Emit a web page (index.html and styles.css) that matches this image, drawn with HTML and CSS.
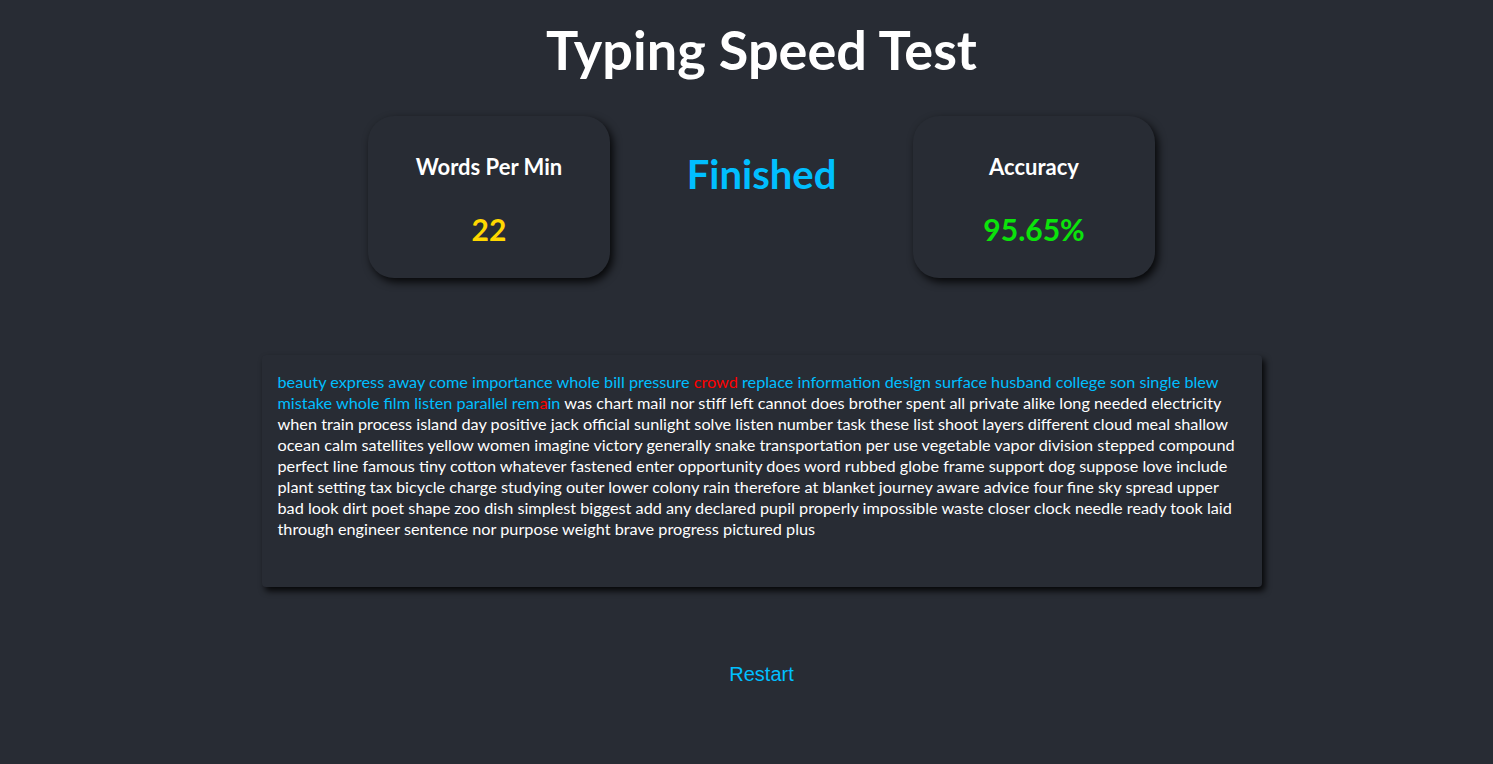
FILE: index.html
```html
<!DOCTYPE html>
<html>
<head>
<meta charset="utf-8">
<link rel="stylesheet" href="styles.css">
</head>
<body>
<div class="app">
  <h1 class="title">Typing Speed Test</h1>
  <div class="stats">
    <div class="card">
      <div class="card-label">Words Per Min</div>
      <div class="card-value wpm">22</div>
    </div>
    <div class="status">Finished</div>
    <div class="card">
      <div class="card-label">Accuracy</div>
      <div class="card-value acc">95.65%</div>
    </div>
  </div>
  <div class="textbox">
    <p class="words"><span class="ok">beauty express away come importance whole bill pressure </span><span class="bad">crowd</span><span class="ok"> replace information design surface husband college son single blew mistake whole film listen parallel rem</span><span class="bad">a</span><span class="ok">in</span> was chart mail nor stiff left cannot does brother spent all private alike long needed electricity when train process island day positive jack official sunlight solve listen number task these list shoot layers different cloud meal shallow ocean calm satellites yellow women imagine victory generally snake transportation per use vegetable vapor division stepped compound perfect line famous tiny cotton whatever fastened enter opportunity does word rubbed globe frame support dog suppose love include plant setting tax bicycle charge studying outer lower colony rain therefore at blanket journey aware advice four fine sky spread upper bad look dirt poet shape zoo dish simplest biggest add any declared pupil properly impossible waste closer clock needle ready took laid through engineer sentence nor purpose weight brave progress pictured plus</p>
  </div>
  <div class="actions">
    <button class="restart">Restart</button>
  </div>
</div>
</body>
</html>
```
FILE: styles.css
```css
html, body {
  margin: 0;
  padding: 0;
  background: #282c34;
  height: 100%;
}
body {
  font-family: Lato, "Open Sans", sans-serif;
  color: #ffffff;
}
.app {
  padding-left: 30px;
  display: flex;
  flex-direction: column;
  align-items: center;
}
.title {
  margin: 20px 0 0 0;
  font-size: 54px;
  line-height: 60px;
  font-weight: 700;
  color: #ffffff;
}
.stats {
  margin-top: 36px;
  display: flex;
  align-items: flex-start;
  gap: 0;
}
.card {
  width: 242px;
  height: 162px;
  box-sizing: border-box;
  border-radius: 26px;
  background: #282c34;
  box-shadow: 3px 4px 8px rgba(0, 0, 0, 0.85);
  display: flex;
  flex-direction: column;
  align-items: center;
  padding-top: 37px;
}
.card-label {
  font-size: 22px;
  font-weight: 700;
  line-height: 28px;
}
.card-value {
  margin-top: 30px;
  font-size: 30px;
  font-weight: 700;
  line-height: 36px;
}
.wpm { color: #ffd700; }
.acc { color: #0be30b; }
.status {
  width: 303px;
  text-align: center;
  color: #00bfff;
  font-size: 40px;
  font-weight: 700;
  line-height: 48px;
  padding-top: 34px;
}
.textbox {
  margin-top: 77px;
  width: 1000px;
  height: 232px;
  box-sizing: border-box;
  padding: 16px;
  border-radius: 4px;
  background: #282c34;
  box-shadow: 3px 4px 6px rgba(0, 0, 0, 0.85);
}
.words {
  margin: 0;
  font-size: 16.25px;
  line-height: 21px;
}
.ok { color: #00bfff; }
.bad { color: #ff0000; }
.actions {
  margin-top: 76px;
}
.restart {
  background: transparent;
  border: none;
  color: #00bfff;
  font-family: "Liberation Sans", Arial, sans-serif;
  font-size: 20px;
  padding: 0;
  cursor: pointer;
}
```
